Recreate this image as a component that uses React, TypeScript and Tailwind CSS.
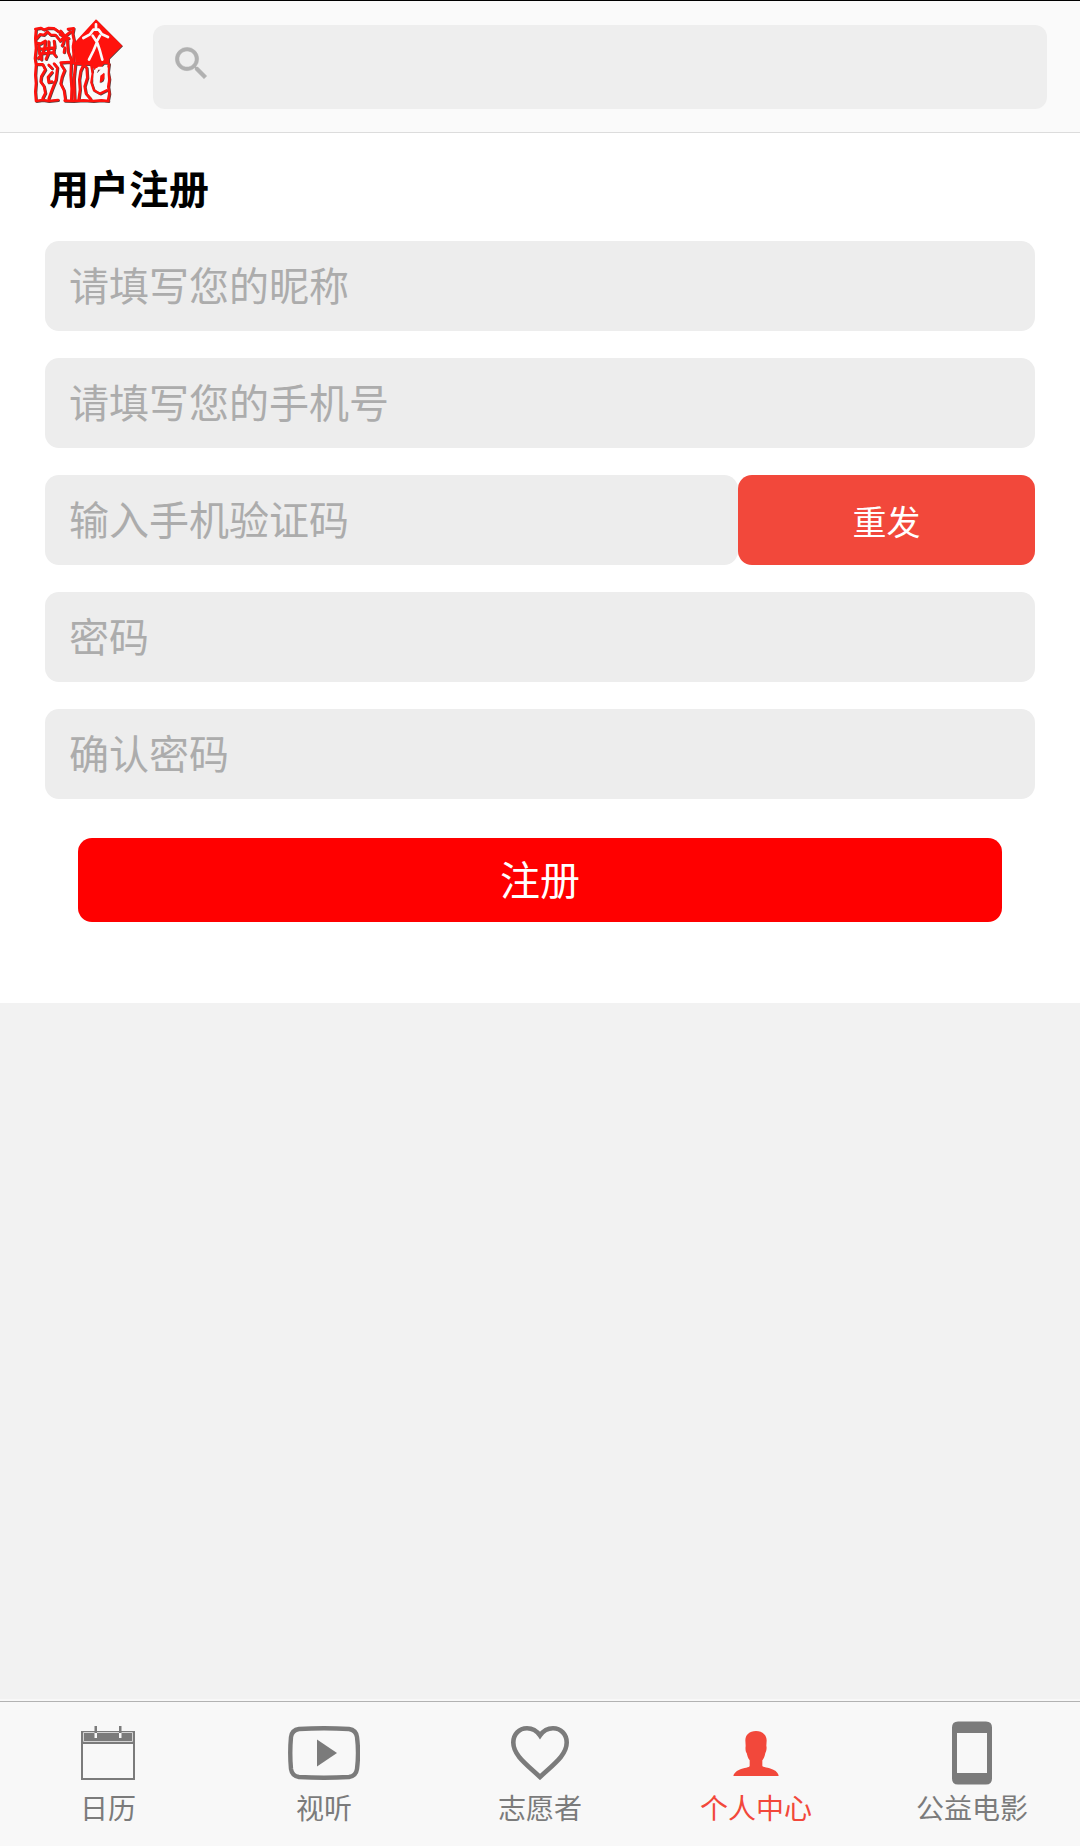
import React from "react";

function SealStrokes() {
  return (
    <>
      <path
        d="M198 13 277 92 238 131 238 147 222 147 200 172 180 147 136 142 134 104 125 92Z"
        fill="currentColor"
        stroke="none"
      />
      <g fill="none" stroke="currentColor" strokeLinejoin="round" strokeLinecap="round">
        <path
          d="M18 42 16 70 18 100 15 130 18 150 16 180 18 205 16 230 18 257 M16 42 32 39 42 44 56 39 72 40 86 50 M114 42 131 40 128 56 132 76 129 96 131 116 130 140 M18 258 38 255 56 258 84 255 M104 257 130 258 160 256 190 258 214 256 235 258 M237 147 234 170 238 192 235 215 238 236 234 257 M92 143 120 141 142 146 180 147"
          strokeWidth="8"
        />
        <path
          d="M20 70 30 58 42 60 52 50 62 60 76 60 86 72 M92 48 104 64 90 78 M122 50 104 64 112 78 M90 58 116 70 M104 64 100 84 96 92 M20 84 32 86 46 78 M46 78 44 96 38 114 24 130 M26 92 28 112 M26 102 74 98 M56 80 56 98 54 118 48 132 M72 78 74 94 70 114 78 124 M28 116 72 112 M34 118 34 134 M104 98 102 112"
          strokeWidth="8"
        />
        <path
          d="M22 148 38 148 46 164 34 184 32 200 42 214 46 234 38 250 M56 150 66 160 M72 146 82 158 78 194 66 224 56 252 M66 172 54 186 56 202 66 200 M94 150 104 166 96 186 92 206 102 226 106 254 M112 78 114 110 124 136 122 180 125 220 124 254 M136 150 132 190 134 254 M160 150 152 168 148 194 150 224 146 254 M160 150 170 158 172 188 164 214 168 236 182 252"
          strokeWidth="8"
        />
        <path d="M184 152 188 176 184 202 192 226 210 236 230 226" strokeWidth="7" />
      </g>
      <path d="M211 182 222 173 226 184 218 198 209 203Z" fill="currentColor" />
    </>
  );
}

function SealLogo() {
  return (
    <svg viewBox="0 0 288 276" className="h-[92px] w-24 shrink-0" role="img" aria-label="文化">
      <g transform="translate(2 2)" className="text-[#5a4040]">
        <SealStrokes />
      </g>
      <g className="text-[#ff120d]">
        <SealStrokes />
      </g>
      <g fill="none" stroke="#fafafa" strokeLinecap="round" strokeLinejoin="round">
        <path d="M198 28V42M160 69 180 58 190 44 206 44 216 58 234 66" strokeWidth="8" />
        <path d="M188 62 200 80 210 62M200 84 190 108 177 134M202 84 210 108 217 134" strokeWidth="8" />
        <path d="M200 164 C192 180 192 204 202 218 C214 224 228 212 228 196 L229 160 206 160" strokeWidth="9" />
      </g>
    </svg>
  );
}

function SearchIcon() {
  return (
    <svg viewBox="0 0 24 24" className="size-[43px] shrink-0" fill="#b0b0b0" stroke="#b0b0b0" strokeWidth="0.3" aria-hidden="true">
      <path d="M15.5 14h-.79l-.28-.27A6.471 6.471 0 0 0 16 9.5 6.5 6.5 0 1 0 9.5 16c1.61 0 3.09-.59 4.23-1.57l.27.28v.79l5 4.99L20.49 19l-4.99-5zm-6 0C7.01 14 5 11.99 5 9.5S7.01 5 9.5 5 14 7.01 14 9.5 11.99 14 9.5 14z" />
    </svg>
  );
}

function CalendarIcon() {
  return (
    <svg viewBox="0 0 54 54" className="size-[54px]" fill="currentColor" aria-hidden="true">
      <path fillRule="evenodd" d="M0 5H54V54H0ZM2 18V52H52V18Z" />
      <path d="M2.500 15.500V6.500H51.500V15.500Z" fill="none" stroke="#d4d4d4" strokeWidth="1" />
      <path d="M13.500 0h2.500v7h-2.500zM38 0h2.500v7H38z" />
      <path d="M13.500 7h2.500v5h-2.500zM38 7h2.500v5H38z" fill="#f8f8f8" />
    </svg>
  );
}

function PlayIcon() {
  return (
    <svg viewBox="0 0 72 54" className="h-[54px] w-[72px]" aria-hidden="true">
      <path
        d="M11 3Q36 1.500 61 3Q68 4 69 11Q71 27 69 43Q68 50 61 51Q36 52.500 11 51Q4 50 3 43Q1.500 27 3 11Q4 4 11 3Z"
        fill="none"
        stroke="currentColor"
        strokeWidth="4.400"
      />
      <path d="M29 13.500 49 27 29 40.500Z" fill="currentColor" />
    </svg>
  );
}

function HeartIcon() {
  return (
    <svg viewBox="0 0 58 54" className="h-[54px] w-[58px]" aria-hidden="true">
      <path
        d="M29 9.500C25.500 4.500 21 2.300 16 2.300C8 2.300 2.300 8.500 2.300 16.500C2.300 29 15 38 29 51C43 38 55.700 29 55.700 16.500C55.700 8.500 50 2.300 42 2.300C37 2.300 32.500 4.500 29 9.500Z"
        fill="none"
        stroke="currentColor"
        strokeWidth="4.600"
      />
    </svg>
  );
}

function PersonIcon() {
  return (
    <svg viewBox="0 0 136 135" className="h-[45px] w-[46px]" fill="currentColor" aria-hidden="true">
      <path d="M68 0C88 0 100 12 100 28L99 45C101 50 99 62 96 66C94 78 91 83 87 88V104C87 109 106 108 120 116C131 121 135 128 136 135H0C1 128 7 121 18 116C32 109 49 110 49 104V88C44 83 42 74 40 66C36 62 36 50 37 45L36 28C36 12 48 0 68 0Z" />
    </svg>
  );
}

function PhoneIcon() {
  return (
    <svg viewBox="0 0 40 64" className="h-16 w-10" fill="currentColor" aria-hidden="true">
      <path
        fillRule="evenodd"
        d="M6 .5H34Q40 .5 40 6.500V57.500Q40 63.500 34 63.500H6Q0 63.500 0 57.500V6.500Q0 .5 6 .5ZM5 12V52H35V12Z"
      />
    </svg>
  );
}

const fieldClass =
  "block h-[90px] w-full min-w-0 rounded-[14px] bg-[#ededed] px-6 pb-1 text-[40px] text-black outline-none placeholder:text-[#acacac] placeholder:opacity-100";

const tabs = [
  { label: "日历", icon: <CalendarIcon />, active: false },
  { label: "视听", icon: <PlayIcon />, active: false },
  { label: "志愿者", icon: <HeartIcon />, active: false },
  { label: "个人中心", icon: <PersonIcon />, active: true },
  { label: "公益电影", icon: <PhoneIcon />, active: false },
];

export default function App() {
  return (
    <div className="flex min-h-screen flex-col bg-[#f2f2f2] font-['Noto_Sans_CJK_SC',sans-serif]">
      <header className="flex items-start border-t border-b border-t-black border-b-[#dcdcdc] bg-[#fafafa] pr-[33px] pb-[23px] pl-[30px]">
        <a href="#home" className="mt-3.5 mr-[27px] shrink-0">
          <SealLogo />
        </a>
        <label className="mt-6 flex h-[84px] flex-1 items-start rounded-xl bg-[#eeeeee] pt-[17px] pl-[17px]">
          <SearchIcon />
          <input
            type="search"
            aria-label="搜索"
            className="h-[52px] min-w-0 flex-1 bg-transparent px-3 text-[34px] outline-none"
          />
        </label>
      </header>

      <main className="flex-1">
        <form className="bg-white px-[45px] pt-6 pb-[81px]" onSubmit={(e) => e.preventDefault()}>
          <h1 className="pl-1 text-[40px] leading-[60px] font-bold text-black">用户注册</h1>
          <div className="mt-6 flex flex-col gap-[27px]">
            <input type="text" aria-label="昵称" placeholder="请填写您的昵称" className={fieldClass} />
            <input type="tel" aria-label="手机号" placeholder="请填写您的手机号" className={fieldClass} />
            <div className="flex">
              <input type="text" aria-label="手机验证码" placeholder="输入手机验证码" className={fieldClass} />
              <button
                type="button"
                className="h-[90px] w-[30%] shrink-0 rounded-[14px] bg-[#f2483b] text-[34px] text-white"
              >
                重发
              </button>
            </div>
            <input type="password" aria-label="密码" placeholder="密码" className={fieldClass} />
            <input type="password" aria-label="确认密码" placeholder="确认密码" className={fieldClass} />
          </div>
          <div className="mt-[39px] px-[33px]">
            <button type="submit" className="h-[84px] w-full rounded-[14px] bg-[#ff0000] pb-1 text-[40px] text-white">
              注册
            </button>
          </div>
        </form>
      </main>

      <nav className="bg-[#f8f8f8] pt-0.5" aria-label="主导航">
        <ul className="grid grid-cols-5 border-t border-[#b2b2b2] pt-[19px] pb-[19px]">
          {tabs.map((tab) => (
            <li key={tab.label}>
              <a
                href={"#" + tab.label}
                aria-current={tab.active ? "page" : undefined}
                className={
                  tab.active
                    ? "flex flex-col items-center text-[#f2483b]"
                    : "flex flex-col items-center text-[#7b7b7b]"
                }
              >
                <span className="flex h-16 items-center">{tab.icon}</span>
                <span className="mt-0.5 text-[28px] leading-10">{tab.label}</span>
              </a>
            </li>
          ))}
        </ul>
      </nav>
    </div>
  );
}
